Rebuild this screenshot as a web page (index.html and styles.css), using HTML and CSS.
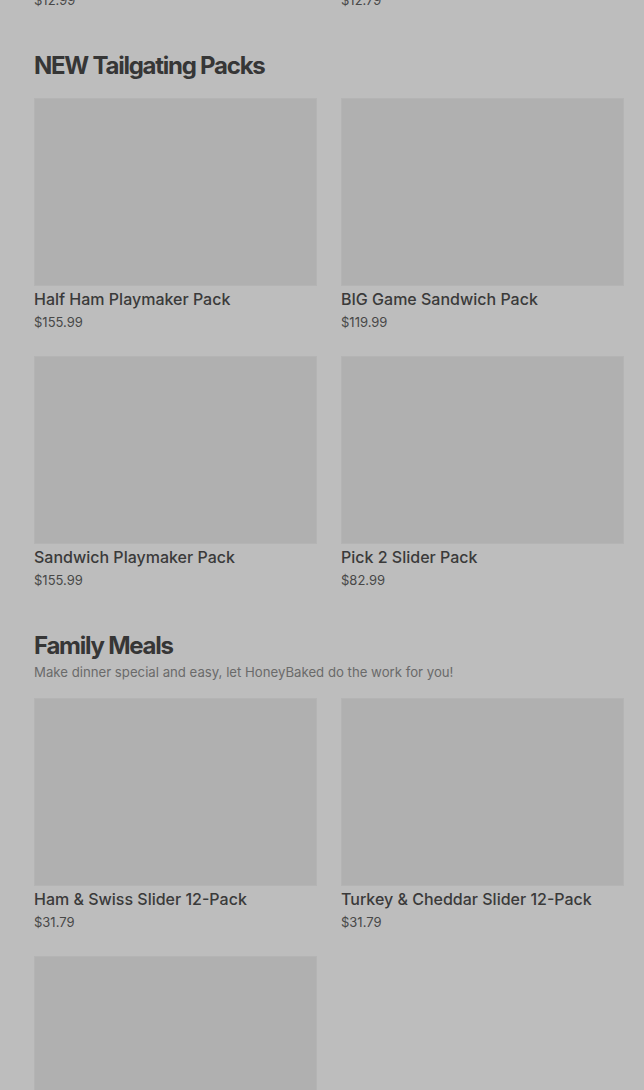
FILE: index.html
```html
<!DOCTYPE html>
<html lang="en">
<head>
    <meta charset="UTF-8">
    <meta name="viewport" content="width=device-width, initial-scale=1.0">
    <title>HoneyBaked Menu</title>
    <link rel="stylesheet" href="styles.css">
</head>
<body>
    <main id="menu">
        <!-- end of the previous section, scrolled out of view -->
        <section class="section section-prev">
            <div class="grid">
                <div class="card">
                    <div class="thumb"></div>
                    <p class="card-title">Classic Ham Sandwich</p>
                    <p class="card-price">$12.99</p>
                </div>
                <div class="card">
                    <div class="thumb"></div>
                    <p class="card-title">Turkey Club Sandwich</p>
                    <p class="card-price">$12.79</p>
                </div>
            </div>
        </section>

        <section class="section">
            <div class="section-head">
                <h2>NEW Tailgating Packs</h2>
            </div>
            <div class="grid">
                <div class="card">
                    <div class="thumb"></div>
                    <p class="card-title">Half Ham Playmaker Pack</p>
                    <p class="card-price">$155.99</p>
                </div>
                <div class="card">
                    <div class="thumb"></div>
                    <p class="card-title">BIG Game Sandwich Pack</p>
                    <p class="card-price">$119.99</p>
                </div>
                <div class="card">
                    <div class="thumb"></div>
                    <p class="card-title">Sandwich Playmaker Pack</p>
                    <p class="card-price">$155.99</p>
                </div>
                <div class="card">
                    <div class="thumb"></div>
                    <p class="card-title">Pick 2 Slider Pack</p>
                    <p class="card-price">$82.99</p>
                </div>
            </div>
        </section>

        <section class="section">
            <div class="section-head">
                <h2>Family Meals</h2>
                <p class="section-sub">Make dinner special and easy, let HoneyBaked do the work for you!</p>
            </div>
            <div class="grid">
                <div class="card">
                    <div class="thumb"></div>
                    <p class="card-title">Ham &amp; Swiss Slider 12-Pack</p>
                    <p class="card-price">$31.79</p>
                </div>
                <div class="card">
                    <div class="thumb"></div>
                    <p class="card-title">Turkey &amp; Cheddar Slider 12-Pack</p>
                    <p class="card-price">$31.79</p>
                </div>
                <div class="card">
                    <div class="thumb"></div>
                    <p class="card-title">Family Meal Bundle</p>
                    <p class="card-price">$59.99</p>
                </div>
            </div>
        </section>
    </main>
</body>
</html>
```

FILE: styles.css
```css
* {
    margin: 0;
    padding: 0;
    box-sizing: border-box;
}
body {
    font-family: Inter, "Noto Sans", sans-serif;
    background-color: #bdbdbd;
    color: #3a3a3a;
    overflow: hidden;
    height: 1090px;
}
#menu {
    padding: 0 20px 0 34px;
    margin-top: -224px;
}
.section {
    padding-top: 39px;
}
.section-prev {
    padding-top: 0;
}
.section-head {
    padding-top: 1px;
    margin-bottom: 16px;
}
h2 {
    font-size: 24px;
    line-height: 32px;
    font-weight: 700;
    letter-spacing: -1.25px;
    color: #363636;
}
.section-sub {
    font-size: 13.2px;
    line-height: 20px;
    color: #6a6a6a;
}
.grid {
    display: grid;
    grid-template-columns: 1fr 1fr;
    column-gap: 24px;
    row-gap: 24px;
}
.thumb {
    height: 188px;
    background-color: #b0b0b0;
    border: 1px solid #b4b4b4;
}
.card-title {
    margin-top: 2px;
    font-size: 16px;
    line-height: 22px;
    font-weight: 500;
    color: #3a3a3a;
}
.card-price {
    margin-top: 2px;
    font-size: 13px;
    line-height: 20px;
    color: #484848;
}
```
